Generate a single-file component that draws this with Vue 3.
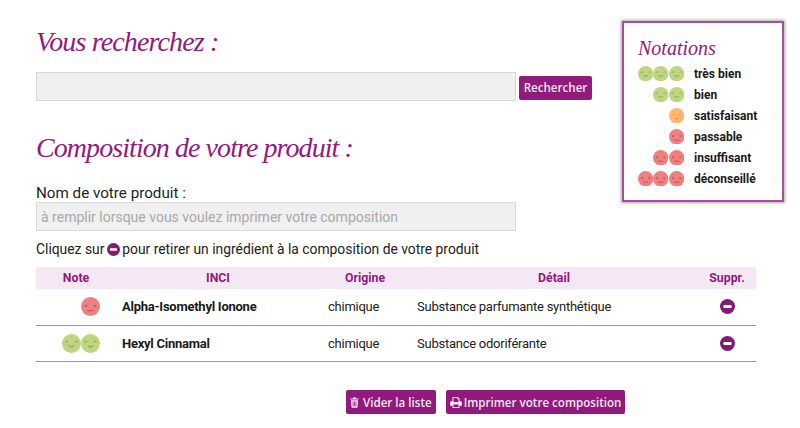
<script setup>
const notations = [
  { faces: ["good", "good", "good"], label: "très bien" },
  { faces: ["good", "good"], label: "bien" },
  { faces: ["ok"], label: "satisfaisant" },
  { faces: ["bad"], label: "passable" },
  { faces: ["bad", "bad"], label: "insuffisant" },
  { faces: ["bad", "bad", "bad"], label: "déconseillé" },
];

const ingredients = [
  { faces: ["bad"], inci: "Alpha-Isomethyl Ionone", origine: "chimique", detail: "Substance parfumante synthétique" },
  { faces: ["good", "good"], inci: "Hexyl Cinnamal", origine: "chimique", detail: "Substance odoriférante" },
];

const faceColors = { good: "#bfd680", ok: "#fcb76f", bad: "#ef8080" };
</script>

<template>
  <div class="page">
    <div class="top">
      <div class="left">
        <h1 class="title first">Vous recherchez :</h1>
        <div class="search">
          <input class="field" type="text" />
          <button class="btn search-btn">Rechercher</button>
        </div>
        <h1 class="title second">Composition de votre produit :</h1>
        <label class="name-label">Nom de votre produit :</label>
        <input class="field name" type="text" placeholder="à remplir lorsque vous voulez imprimer votre composition" />
        <p class="hint">
          Cliquez sur
          <svg class="minus small" viewBox="0 0 20 20"><circle cx="10" cy="10" r="10" /><rect x="4.5" y="8" width="11" height="4" rx="1" fill="#fff" /></svg>
          pour retirer un ingrédient à la composition de votre produit
        </p>
      </div>
      <aside class="panel">
        <h2 class="panel-title">Notations</h2>
        <div v-for="n in notations" :key="n.label" class="panel-row">
          <div class="faces">
            <svg v-for="(f, i) in n.faces" :key="i" class="face" viewBox="0 0 20 20">
              <circle cx="10" cy="10" r="10" :fill="faceColors[f]" />
              <g v-if="f === 'good'" fill="none" stroke="#7d8f4a" stroke-width="1">
                <path d="M3.5 8.5q1.5-2 3 0M13.5 8.5q1.500-2 3 0M7 12q3 3.500 6 0" />
              </g>
              <g v-else-if="f === 'ok'" fill="none" stroke="#b98040" stroke-width="1">
                <path d="M5 8.500h1.500M13.500 8.500H15M8 14h4" />
              </g>
              <g v-else fill="none" stroke="#a85252" stroke-width="1">
                <path d="M4 8l2.500 2.500M6.500 8L4 10.500M13.500 8l2.500 2.500M16 8l-2.500 2.500M6.500 14.500h7" />
              </g>
            </svg>
          </div>
          <span class="panel-label">{{ n.label }}</span>
        </div>
      </aside>
    </div>

    <div class="table">
      <div class="row head">
        <span>Note</span>
        <span>INCI</span>
        <span>Origine</span>
        <span>Détail</span>
        <span>Suppr.</span>
      </div>
      <div v-for="ing in ingredients" :key="ing.inci" class="row item">
        <div class="note">
          <svg v-for="(f, i) in ing.faces" :key="i" class="face big" viewBox="0 0 20 20">
            <circle cx="10" cy="10" r="10" :fill="faceColors[f]" />
            <g v-if="f === 'good'" fill="none" stroke="#7d8f4a" stroke-width="1">
              <path d="M3.500 8.500q1.500-2 3 0M13.500 8.500q1.500-2 3 0M7 12q3 3.500 6 0" />
            </g>
            <g v-else fill="none" stroke="#a85252" stroke-width="1">
              <path d="M4 8l2.500 2.500M6.500 8L4 10.500M13.500 8l2.500 2.500M16 8l-2.500 2.500M6.500 14.500h7" />
            </g>
          </svg>
        </div>
        <strong class="inci">{{ ing.inci }}</strong>
        <span class="origine">{{ ing.origine }}</span>
        <span class="detail">{{ ing.detail }}</span>
        <div class="del">
          <svg class="minus" viewBox="0 0 20 20"><circle cx="10" cy="10" r="10" /><rect x="4.500" y="8" width="11" height="4" rx="1" fill="#fff" /></svg>
        </div>
      </div>
    </div>

    <div class="actions">
      <button class="btn">
        <svg class="btn-icon trash" viewBox="0 0 12 14"><path d="M4 1.500 4.800 0h2.400L8 1.500h3.500V3H.5V1.500zM1.300 4h9.400l-.6 9a1 1 0 0 1-1 1H2.900a1 1 0 0 1-1-1zM3.600 5.500v6.500h1V5.500zM5.500 5.500v6.500h1V5.500zM7.400 5.500v6.500h1V5.500z" fill-rule="evenodd" /></svg>
        Vider la liste
      </button>
      <button class="btn">
        <svg class="btn-icon print" viewBox="0 0 15 14"><path d="M3 0h7l2 2v3.500h1.200A1.800 1.800 0 0 1 15 7.300V11h-3v3H3v-3H0V7.300a1.800 1.800 0 0 1 1.800-1.800H3zM4.300 1.300v5h6.400V3H9V1.300zM4.300 9.500v3.200h6.400V9.500z" fill-rule="evenodd" /></svg>
        Imprimer votre composition
      </button>
    </div>
  </div>
</template>

<style scoped>
.page {
  width: 800px;
  height: 428px;
  box-sizing: border-box;
  padding: 21px 44px 0 36px;
  font-family: Roboto, "Liberation Sans", sans-serif;
  font-size: 13.85px;
  color: #222;
  overflow: hidden;
}
.top {
  display: flex;
  justify-content: space-between;
  align-items: flex-start;
  height: 246px;
}
.left {
  width: 560px;
}
.title {
  margin: 0;
  font-family: "Liberation Serif", serif;
  font-style: italic;
  font-weight: 400;
  font-size: 28px;
  color: #93197f;
  line-height: 36px;
}
.first {
  letter-spacing: -0.85px;
  margin-top: 3px;
}
.second {
  letter-spacing: -0.93px;
  margin-top: 29px;
}
.search {
  display: flex;
  align-items: center;
  gap: 3px;
  margin-top: 12px;
  width: 560px;
}
.field {
  display: block;
  width: 480px;
  height: 29px;
  box-sizing: border-box;
  padding: 0 4px;
  background: #f0f0f0;
  border: 1px solid #d8d8d8;
  font-family: inherit;
  font-size: 14px;
  outline: none;
}
.field::placeholder {
  color: #a9a9a9;
  opacity: 1;
}
.name-label {
  display: block;
  margin-top: 19px;
  font-size: 15.2px;
  line-height: 17px;
}
.hint {
  margin: 9px 0 0;
  line-height: 18px;
  white-space: nowrap;
}
.btn {
  display: inline-flex;
  align-items: center;
  justify-content: center;
  height: 24px;
  padding: 0 4px;
  background: #921a7c;
  color: #f4e6f0;
  border: none;
  border-radius: 2px;
  font-family: "Open Sans", sans-serif;
  font-size: 11.6px;
  font-weight: 600;
  white-space: nowrap;
}
.search-btn {
  width: 73px;
  padding: 0;
  margin-top: 2px;
}
.btn-icon {
  fill: #f4e6f0;
}
.trash {
  width: 9px;
  height: 11px;
  margin-right: 4px;
}
.print {
  width: 12px;
  height: 11px;
  margin-right: 2px;
}
.panel {
  width: 162px;
  height: 181px;
  box-sizing: border-box;
  padding: 12px 14px;
  border: 2px solid #a64f98;
  box-shadow: 0 0 3px 1px #aaa;
  background: #fff;
  flex: none;
  margin-right: -28px;
}
.panel-title {
  margin: 0 0 2px;
  font-family: "Liberation Serif", serif;
  font-style: italic;
  font-weight: 400;
  font-size: 20px;
  line-height: 26px;
  color: #93197f;
}
.panel-row {
  display: flex;
  align-items: center;
  height: 21px;
}
.faces {
  display: flex;
  justify-content: flex-end;
  width: 46px;
  margin-right: 10px;
}
.face {
  width: 15.4px;
  height: 15.4px;
  flex: none;
}
.panel-label {
  font-size: 12px;
  font-weight: 700;
  color: #1a1a1a;
  white-space: nowrap;
}
.table {
  width: 720px;
}
.row {
  display: grid;
  grid-template-columns: 80px 204px 90px 288px 58px;
  align-items: center;
}
.head {
  height: 22px;
  background: #f5e8f4;
  color: #93197f;
  font-size: 12.3px;
  font-weight: 700;
  text-align: center;
}
.item {
  height: 35.5px;
  border-bottom: 1px solid #999;
  font-size: 13px;
  letter-spacing: -0.25px;
}
.note {
  display: flex;
  justify-content: flex-end;
  padding-right: 16px;
}
.big {
  width: 19px;
  height: 19px;
}
.inci {
  padding-left: 6px;
  font-weight: 700;
  color: #1a1a1a;
}
.origine {
  padding-left: 8px;
}
.detail {
  padding-left: 7px;
}
.del {
  display: flex;
  justify-content: center;
}
.minus {
  width: 15px;
  height: 15px;
  fill: #861a72;
}
.minus.small {
  width: 13px;
  height: 13px;
  margin: 0 -1px;
  vertical-align: -2px;
}
.actions {
  display: flex;
  gap: 10px;
  margin-top: 28px;
  padding-left: 310px;
}
</style>
